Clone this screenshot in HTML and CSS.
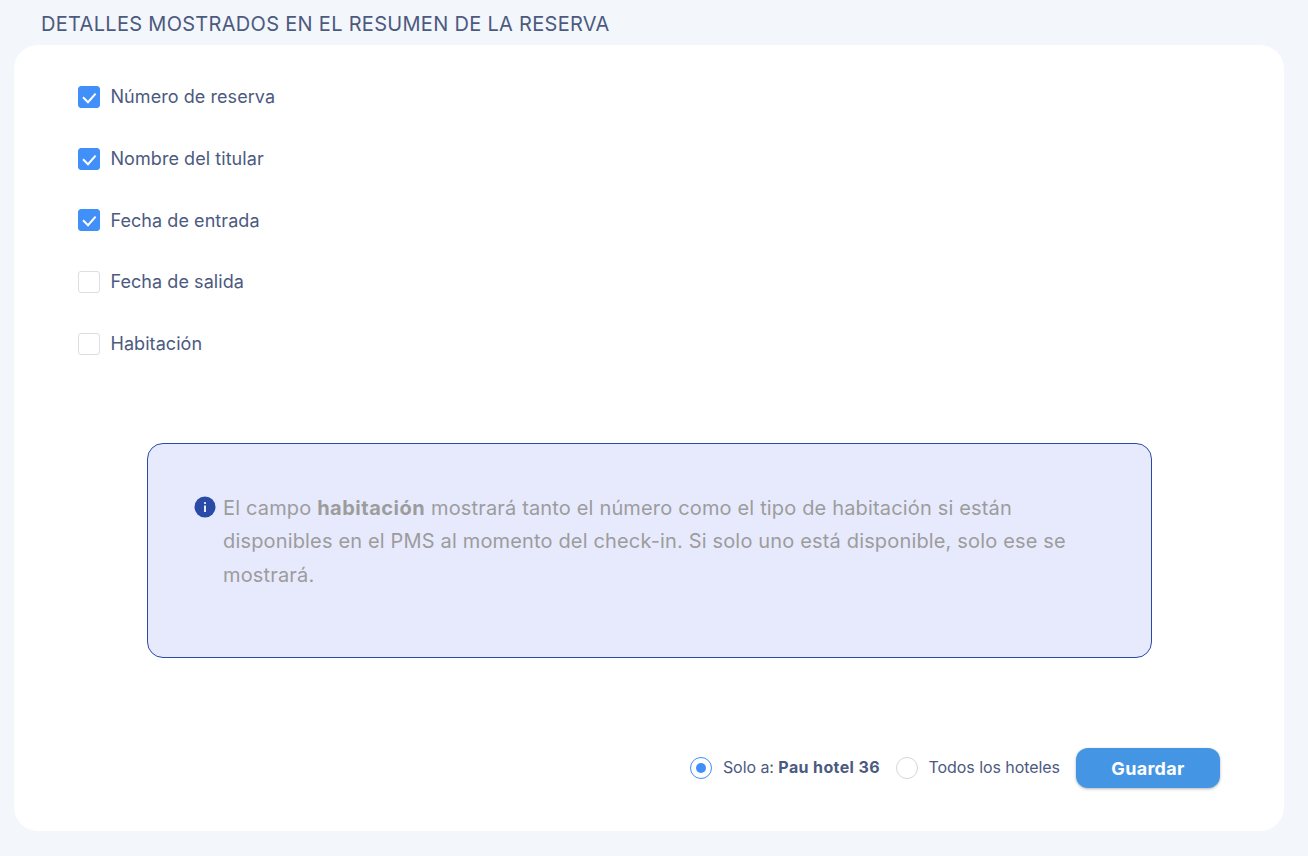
FILE: index.html
```html
<!DOCTYPE html>
<html lang="es">
<head>
<meta charset="utf-8">
<title>Detalles</title>
<link rel="stylesheet" href="styles.css">
</head>
<body>
<h2 class="title">DETALLES MOSTRADOS EN EL RESUMEN DE LA RESERVA</h2>
<main class="card">
  <ul class="checks">
    <li class="check-row"><span class="box on"><svg viewBox="0 0 22 22" width="22" height="22"><path d="M5 11.2l5 5 7.6-8.6" fill="none" stroke="#fff" stroke-width="2"/></svg></span>Número de reserva</li>
    <li class="check-row"><span class="box on"><svg viewBox="0 0 22 22" width="22" height="22"><path d="M5 11.2l5 5 7.6-8.6" fill="none" stroke="#fff" stroke-width="2"/></svg></span>Nombre del titular</li>
    <li class="check-row"><span class="box on"><svg viewBox="0 0 22 22" width="22" height="22"><path d="M5 11.2l5 5 7.6-8.6" fill="none" stroke="#fff" stroke-width="2"/></svg></span>Fecha de entrada</li>
    <li class="check-row"><span class="box"></span>Fecha de salida</li>
    <li class="check-row"><span class="box"></span>Habitación</li>
  </ul>
  <section class="info">
    <svg class="info-icon" viewBox="0 0 22 22" width="22" height="22"><circle cx="11" cy="11" r="10.5" fill="#2a4aa8"/><rect x="10.1" y="9.5" width="1.8" height="6.5" fill="#fff"/><circle cx="11" cy="7" r="1.1" fill="#fff"/></svg>
    <p class="info-text">El campo <strong>habitación</strong> mostrará tanto el número como el tipo de habitación si están disponibles en el PMS al momento del check-in. Si solo uno está disponible, solo ese se mostrará.</p>
  </section>
  <footer class="actions">
    <span class="radio on"></span><span class="radio-label">Solo a: <strong>Pau hotel 36</strong></span>
    <span class="radio"></span><span class="radio-label">Todos los hoteles</span>
    <button class="save">Guardar</button>
  </footer>
</main>
</body>
</html>
```
FILE: styles.css
```css
* { box-sizing: border-box; }
html, body { margin: 0; height: 100%; }
body {
  background: #f3f6fb;
  font-family: Inter, "Liberation Sans", sans-serif;
  color: #4c5a80;
  padding: 0 24px 25px 14px;
  overflow: hidden;
}
.title {
  margin: 0;
  height: 45px;
  padding: 12px 0 0 27px;
  font-size: 20px;
  line-height: 24px;
  font-weight: 400;
  letter-spacing: 0.3px;
}
.card {
  background: #fff;
  border-radius: 24px;
  height: 786px;
  padding: 21.025px 64px 43px;
  display: flex;
  flex-direction: column;
}
.checks { list-style: none; margin: 0; padding: 0; }
.check-row {
  display: flex;
  align-items: center;
  height: 61.7px;
  font-size: 18px;
  gap: 10.5px;
  letter-spacing: 0.06px;
}
.box {
  width: 22px;
  height: 22px;
  border: 1px solid #dcdee3;
  border-radius: 3px;
  background: #fff;
  flex: none;
  display: block;
}
.box svg { display: block; margin: -1px; }
.box.on { background: #418ff8; border-color: #418ff8; }
.info {
  width: 1005px;
  height: 215px;
  margin: 68.475px 0 0 69px;
  background: #e7eafd;
  border: 1px solid #2a4aa8;
  border-radius: 16px;
  padding: 48px 60px 0 46px;
  display: flex;
  gap: 7px;
}
.info-icon { flex: none; margin-top: 4px; }
.info-text {
  margin: 0;
  font-size: 20px;
  line-height: 33.5px;
  color: #9c9c9c;
  letter-spacing: 0.16px;
}
.info-text strong { font-weight: 700; letter-spacing: 0.5px; }
.actions {
  margin-top: auto;
  display: flex;
  align-items: center;
  justify-content: flex-end;
  font-size: 16px;
}
.radio {
  width: 22px;
  height: 22px;
  border: 1px solid #d5d7db;
  border-radius: 50%;
  background: #fff;
  flex: none;
  position: relative;
  margin-bottom: 1px;
}
.radio.on { border-color: #418ff8; }
.radio.on::after {
  content: "";
  position: absolute;
  inset: 5px;
  border-radius: 50%;
  background: #418ff8;
}
.radio-label { margin: 0 16px 2px 10.5px; letter-spacing: -0.06px; }
.radio-label strong { font-weight: 700; letter-spacing: 0.38px; }
.save {
  width: 144px;
  height: 40px;
  border: 0;
  border-radius: 12px;
  background: #4496e4;
  color: #fff;
  font: 700 18px Inter, "Liberation Sans", sans-serif;
  letter-spacing: 0.3px;
  box-shadow: 0 1px 3px rgba(0,0,0,.3);
}
```
